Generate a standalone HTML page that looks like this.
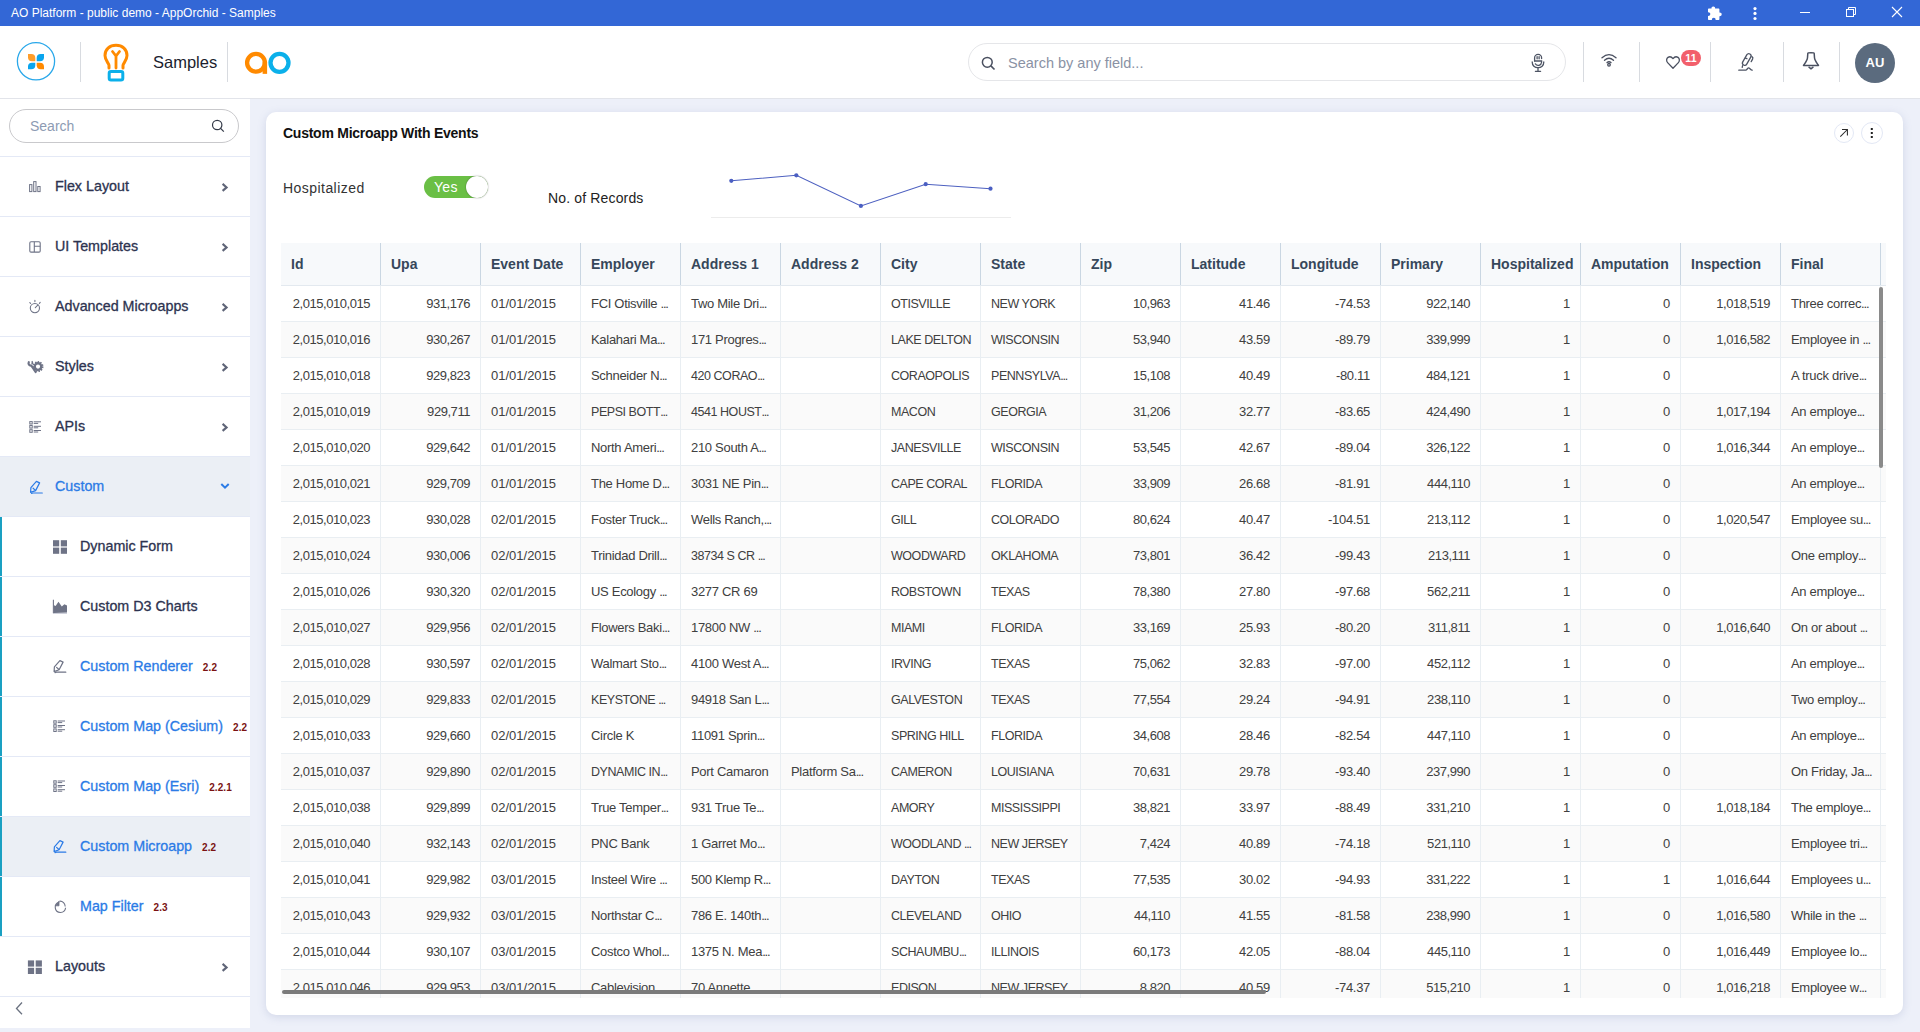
<!DOCTYPE html>
<html><head><meta charset="utf-8"><title>AO Platform</title>
<style>
*{box-sizing:border-box;margin:0;padding:0}
html,body{width:1920px;height:1032px;overflow:hidden;background:#edf0f9;font-family:"Liberation Sans",sans-serif;color:#222}
.abs{position:absolute}
#tb{position:absolute;left:0;top:0;width:1920px;height:26px;background:#3367d6;color:#fff;font-size:12px;line-height:26px;padding-left:11px}
#hd{position:absolute;left:0;top:26px;width:1920px;height:73px;background:#fff;border-bottom:1px solid #e2e4ea}
.vd{position:absolute;top:16px;width:1px;height:40px;background:#d8dbe0}
#side{position:absolute;left:0;top:99px;width:250px;height:929px;background:#fff}
.si{position:absolute;left:0;width:250px;height:60px;border-bottom:1px solid #e4e9f6}
.si.act{background:#ebeff5}
.tbar{position:absolute;left:0;top:0;width:2px;height:59px;background:#1aa0c2}
.sic{position:absolute;left:25px;top:20px}
.slab{position:absolute;left:55px;top:0;line-height:59px;font-size:14.3px;color:#2d3350;-webkit-text-stroke:0.3px currentColor;white-space:nowrap}
.slab.sub{left:80px}
.bdg{font-size:10px;color:#7a1212;margin-left:10px;font-weight:bold;-webkit-text-stroke:0;letter-spacing:0.1px}
.chev{position:absolute;left:219px;top:24px}
#card{position:absolute;left:266px;top:112px;width:1637px;height:903px;background:#fff;border-radius:10px;box-shadow:0 2px 9px rgba(110,125,175,0.22)}
#tbl{position:absolute;left:15px;top:131px;width:1605px;height:755px;overflow:hidden}
.thead{position:absolute;left:0;top:0;width:1605px;height:43px;background:#f7f9fb;border-bottom:1px solid #e3e9ef}
.th{position:absolute;top:0;width:100px;height:42px;border-right:1px solid #c9d6e2;padding-left:10px;line-height:42px;font-size:14px;font-weight:bold;color:#36475a;white-space:nowrap;overflow:hidden}
.tr{position:absolute;left:0;width:1605px;height:36px;background:#fff;border-bottom:1px solid #e9eef2}
.tr.alt{background:#fafafa}
.td{position:absolute;top:0;width:100px;height:35px;border-right:1px solid #e9eef2;padding:0 10px;line-height:35px;font-size:13px;color:#404040;white-space:nowrap;overflow:hidden;letter-spacing:-0.3px}
.td.n{letter-spacing:-0.45px}
.td.d{letter-spacing:0}
.td.u{font-size:12.5px;letter-spacing:-0.45px;padding-top:1px}
.td.r{text-align:right}
.el{font-style:normal;letter-spacing:-1.2px}
</style></head><body>
<div id="tb">AO Platform - public demo - AppOrchid - Samples
<svg class="abs" style="left:1707px;top:5px" width="16" height="16" viewBox="0 0 16 16"><path d="M6.3 1.5 C7.6 1.5 8.2 2.3 8.1 3.6 H11.4 C12 3.6 12.4 4 12.4 4.6 V7.4 C13.8 7.3 14.7 8 14.7 9.3 C14.7 10.6 13.8 11.3 12.4 11.2 V14 C12.4 14.6 12 15 11.4 15 H8.6 C8.7 13.6 8 12.8 6.8 12.8 C5.5 12.8 4.8 13.6 4.9 15 H2 C1.4 15 1 14.6 1 14 V11 C2.4 11.1 3.3 10.4 3.3 9.1 C3.3 7.8 2.4 7.1 1 7.2 V4.6 C1 4 1.4 3.6 2 3.6 H4.5 C4.4 2.3 5 1.5 6.3 1.5 Z" fill="#fff"/></svg>
<svg class="abs" style="left:1751px;top:5px" width="8" height="16" viewBox="0 0 8 16"><g fill="#fff"><circle cx="4" cy="3.6" r="1.6"/><circle cx="4" cy="8.4" r="1.6"/><circle cx="4" cy="13.5" r="1.6"/></g></svg>
<div class="abs" style="left:1800px;top:12px;width:10px;height:1px;background:#fff"></div>
<svg class="abs" style="left:1845px;top:6px" width="12" height="12" viewBox="0 0 12 12"><g fill="none" stroke="#fff" stroke-width="1"><rect x="1.5" y="3.5" width="7" height="7"/><path d="M3.5 3.5 V1.5 H10.5 V8.5 H8.5"/></g></svg>
<svg class="abs" style="left:1891px;top:6px" width="12" height="12" viewBox="0 0 12 12"><path d="M1 1 L11 11 M11 1 L1 11" stroke="#fff" stroke-width="1.1"/></svg>
</div>
<div id="hd">
<svg class="abs" style="left:16px;top:16px" width="40" height="40" viewBox="0 0 40 40"><circle cx="20" cy="19.3" r="18.6" fill="none" stroke="#2aa8ea" stroke-width="1.3"/>
<path d="M12 12 H15.3 A4 4 0 0 1 19.3 16 V19.3 H16 A4 4 0 0 1 12 15.3 Z" fill="#ff9d2a"/>
<path d="M28 12 V15.3 A4 4 0 0 1 24 19.3 H20.7 V16 A4 4 0 0 1 24.7 12 Z" fill="#0aa5ee"/>
<path d="M12 27.3 V24 A4 4 0 0 1 16 20.7 H19.3 V23.3 A4 4 0 0 1 15.3 27.3 Z" fill="#0aa5ee"/>
<path d="M28 27.3 H24.7 A4 4 0 0 1 20.7 23.3 V20.7 H24 A4 4 0 0 1 28 24.7 Z" fill="#ff8a00"/>
</svg>
<div class="vd" style="left:80px"></div>
<svg class="abs" style="left:100px;top:17px" width="32" height="40" viewBox="0 0 32 40"><path d="M9 25 V22.5 C9 20.5 5 17.5 5 12.5 C5 6.5 9.5 2.2 16 2.2 C22.5 2.2 27 6.5 27 12.5 C27 17.5 23 20.5 23 22.5 V25" fill="none" stroke="#ff8a00" stroke-width="3" stroke-linecap="round"/><path d="M16 25 V13 M12.5 8.5 L16 13 L19.5 8.5" fill="none" stroke="#ff8a00" stroke-width="2.8" stroke-linecap="round"/><rect x="9.2" y="28.5" width="13.6" height="8.5" rx="1.8" fill="none" stroke="#0bb0ea" stroke-width="3"/></svg>
<div class="abs" style="left:153px;top:26px;font-size:16.5px;color:#1b1d2e;line-height:20px">Samples</div>
<div class="vd" style="left:227px"></div>
<svg class="abs" style="left:244px;top:25px" width="50" height="24" viewBox="0 0 50 24"><circle cx="12" cy="11.8" r="8.9" fill="none" stroke="#ff8a00" stroke-width="4.3"/><rect x="18.6" y="11" width="4.5" height="11.85" fill="#ff8a00"/><circle cx="35.5" cy="11.8" r="9" fill="none" stroke="#0bb0ea" stroke-width="4.3"/></svg>
<div class="abs" style="left:968px;top:17px;width:598px;height:38px;border:1px solid #e5e6e9;border-radius:19px"></div>
<svg class="abs" style="left:981px;top:30px" width="15" height="15" viewBox="0 0 15 15"><circle cx="6.3" cy="6.3" r="4.9" fill="none" stroke="#4a5060" stroke-width="1.5"/><path d="M9.9 9.9 L13.5 13.5" stroke="#4a5060" stroke-width="1.6"/></svg>
<div class="abs" style="left:1008px;top:27px;font-size:14.5px;color:#8a92a4;line-height:20px">Search by any field...</div>
<svg class="abs" style="left:1529px;top:27px" width="18" height="20" viewBox="0 0 18 20"><g fill="none" stroke="#4d5464" stroke-width="1.3" stroke-linecap="round"><path d="M5.6 8 V4.9 A3.5 3.5 0 0 1 12.6 4.9 V5.6"/><path d="M5.6 8 H12.6 V9.3 A3.4 3.4 0 0 1 6.4 10.9"/><path d="M8.1 3.6 V5.8 M10.1 3.6 V5.8"/><path d="M3.2 9 C3.2 12.6 5.7 14.7 9 14.7 C12.3 14.7 14.8 12.6 14.8 9"/><path d="M9 14.7 V18 M6.4 18.3 H11.6"/></g></svg>
<div class="vd" style="left:1583px"></div>
<svg class="abs" style="left:1600px;top:27px" width="18" height="14" viewBox="0 0 18 14"><g fill="none" stroke="#4a5060" stroke-width="1.3" stroke-linecap="round"><path d="M2 4.8 C6.5 0.8 11.5 0.8 16 4.8"/><path d="M4.5 7.3 C7.3 4.8 10.7 4.8 13.5 7.3"/><path d="M7 9.6 C8.2 8.6 9.8 8.6 11 9.6"/><circle cx="9" cy="11.8" r="1.3"/></g></svg>
<div class="vd" style="left:1639px"></div>
<svg class="abs" style="left:1664px;top:28px" width="18" height="17" viewBox="0 0 18 17"><path d="M9 14.2 L3.6 8.6 C2.2 7.1 2.3 4.6 4 3.4 C5.6 2.3 7.6 2.8 9 4.6 C10.4 2.8 12.4 2.3 14 3.4 C15.7 4.6 15.8 7.1 14.4 8.6 Z" fill="none" stroke="#4a5060" stroke-width="1.3" stroke-linejoin="round"/></svg>
<div class="abs" style="left:1681px;top:24px;width:20px;height:16px;border-radius:8px;background:#f25f6b;color:#fff;font-size:10.5px;font-weight:bold;text-align:center;line-height:16px;letter-spacing:0.3px">11</div>
<div class="vd" style="left:1710px"></div>
<svg class="abs" style="left:1736px;top:24px" width="22" height="22" viewBox="0 0 22 22"><g fill="none" stroke="#4d5464" stroke-width="1.3" stroke-linecap="round" stroke-linejoin="round"><rect x="8.45" y="3.2" width="4.6" height="12.6" rx="2.3" transform="rotate(30 10.75 9.5)"/><path d="M15.9 6.6 C16.9 7.2 17.1 8.2 16.6 9.1 L15.2 11.6"/><path d="M9.4 8.1 L10.9 8.7"/><path d="M6.6 15.6 L6.2 17.4"/><path d="M2.8 20.2 H9.8 C10.8 20.2 11.6 17.8 12.6 17.8 C13.6 17.8 14.6 20.2 16.2 20.2"/></g></svg>
<div class="vd" style="left:1783px"></div>
<svg class="abs" style="left:1801px;top:25px" width="20" height="20" viewBox="0 0 20 20"><g fill="none" stroke="#4a5060" stroke-width="1.5" stroke-linejoin="round"><path d="M6.8 2.5 C6.8 1.6 13.2 1.6 13.2 2.5 L13.5 6.8 C13.7 9.5 15.8 12 17.5 14.4 H2.5 C4.2 12 6.3 9.5 6.5 6.8 Z"/><path d="M8 16.2 L10 17.8 L12 16.2" stroke-linecap="round"/></g></svg>
<div class="vd" style="left:1839px"></div>
<div class="abs" style="left:1855px;top:17px;width:40px;height:40px;border-radius:20px;background:#5b6b7e;color:#fff;font-size:13px;font-weight:bold;text-align:center;line-height:40px">AU</div>
</div>
<div id="side">
<div class="abs" style="left:9px;top:10px;width:230px;height:34px;border:1px solid #c9c9cc;border-radius:17px"></div>
<div class="abs" style="left:30px;top:17px;font-size:14px;color:#8d9bb3;line-height:20px">Search</div>
<svg class="abs" style="left:210px;top:19px" width="16" height="16" viewBox="0 0 16 16"><circle cx="7.2" cy="7" r="4.7" fill="none" stroke="#333a48" stroke-width="1.2"/><path d="M10.6 10.4 L13.8 13.6" stroke="#333a48" stroke-width="1.3"/></svg>
<div class="abs" style="left:0;top:57px;width:250px;height:1px;background:#e4e9f6"></div>
<div class="si" style="top:58px"><svg class="sic" style="left:25px" width="20" height="20" viewBox="0 0 20 20"><g fill="none" stroke="#6e7386" stroke-width="1"><rect x="4.6" y="7.6" width="2.3" height="7"/><rect x="8.7" y="4.6" width="2.3" height="10"/><rect x="12.8" y="9.5" width="2.3" height="5.1"/></g></svg><div class="slab">Flex Layout</div><svg class="chev" width="12" height="14" viewBox="0 0 12 14"><path d="M3.6 2.9 L7.6 6.4 L3.6 9.9" fill="none" stroke="#5f6578" stroke-width="2.1"/></svg></div>
<div class="si" style="top:118px"><svg class="sic" style="left:25px" width="20" height="20" viewBox="0 0 20 20"><g fill="none" stroke="#6e7386" stroke-width="1.1"><rect x="4.8" y="4.7" width="10.4" height="10.4" rx="1.2"/><path d="M9.3 4.7 V15.1 M9.3 9.3 H15.2"/></g></svg><div class="slab">UI Templates</div><svg class="chev" width="12" height="14" viewBox="0 0 12 14"><path d="M3.6 2.9 L7.6 6.4 L3.6 9.9" fill="none" stroke="#5f6578" stroke-width="2.1"/></svg></div>
<div class="si" style="top:178px"><svg class="sic" style="left:25px" width="20" height="20" viewBox="0 0 20 20"><g fill="none" stroke="#6e7386" stroke-width="1.1" stroke-linecap="round"><circle cx="9.9" cy="11.1" r="4.6"/><path d="M9.9 3.2 V4.6 M4.8 5.6 L5.6 6.4 M15.2 5.4 L14.4 6.3 M10.3 10.6 L12.8 8.2"/></g></svg><div class="slab">Advanced Microapps</div><svg class="chev" width="12" height="14" viewBox="0 0 12 14"><path d="M3.6 2.9 L7.6 6.4 L3.6 9.9" fill="none" stroke="#5f6578" stroke-width="2.1"/></svg></div>
<div class="si" style="top:238px"><svg class="sic" style="left:25px" width="20" height="20" viewBox="0 0 20 20"><g fill="none" stroke="#6e7386"><path d="M3.8 5.2 C3 7 4.2 9 6.4 8.6 L10.6 15" stroke-width="2.2" stroke-linecap="round"/><path d="M6.8 4.2 C7.6 5 7.6 6.4 6.7 7.2" stroke-width="1.6"/><circle cx="13" cy="9.6" r="3.3" stroke-width="2.4"/><circle cx="13" cy="9.6" r="4.6" stroke-width="1.8" stroke-dasharray="1.4 1.2"/></g></svg><div class="slab">Styles</div><svg class="chev" width="12" height="14" viewBox="0 0 12 14"><path d="M3.6 2.9 L7.6 6.4 L3.6 9.9" fill="none" stroke="#5f6578" stroke-width="2.1"/></svg></div>
<div class="si" style="top:298px"><svg class="sic" style="left:25px" width="20" height="20" viewBox="0 0 20 20"><g transform="translate(0,0)" fill="none" stroke="#6e7386" stroke-width="1"><rect x="4.8" y="4.6" width="2.4" height="2.4"/><rect x="4.8" y="8.5" width="2.4" height="2.6"/><rect x="4.8" y="12.7" width="2.4" height="2.6"/><path d="M8.7 4.8 H16 M8.7 6.4 H13.2 M8.7 9.3 H16 M8.7 10.8 H13.2 M8.7 13.5 H16 M8.7 15 H13.2"/></g></svg><div class="slab">APIs</div><svg class="chev" width="12" height="14" viewBox="0 0 12 14"><path d="M3.6 2.9 L7.6 6.4 L3.6 9.9" fill="none" stroke="#5f6578" stroke-width="2.1"/></svg></div>
<div class="si act" style="top:358px"><svg class="sic" style="left:25px" width="20" height="20" viewBox="0 0 20 20"><g transform="translate(0,0)" fill="none" stroke="#2b7be6" stroke-width="1.2" stroke-linejoin="round" stroke-linecap="round"><path d="M5.6 15.4 L5.9 10.6 L11.4 4.4 L14.6 5.9 L10.6 13.6 Z M8.1 11.2 L10.2 13.1"/><path d="M6.5 16.4 L8 16 H17.3"/></g></svg><div class="slab" style="color:#2b7be6">Custom</div><svg class="chev" width="14" height="12" viewBox="0 0 14 12"><path d="M2.3 3 L6 6.6 L9.7 3" fill="none" stroke="#2b7be6" stroke-width="2"/></svg></div>
<div class="si" style="top:418px"><svg class="sic" style="left:50px" width="20" height="20" viewBox="0 0 20 20"><g transform="translate(0,0)" fill="#6e7386"><rect x="3" y="3.2" width="6.2" height="6.2"/><rect x="10.8" y="3.2" width="6.2" height="6.2"/><rect x="3" y="10.6" width="6.2" height="6.2"/><rect x="10.8" y="10.6" width="6.2" height="6.2"/></g></svg><div class="slab sub">Dynamic Form</div><div class="tbar"></div></div>
<div class="si" style="top:478px"><svg class="sic" style="left:50px" width="20" height="20" viewBox="0 0 20 20"><path d="M3.4 2.8 V16.2 H17" fill="none" stroke="#b9bccb" stroke-width="1"/><path d="M3.4 2.8 V16.2" stroke="#6e7386" stroke-width="1"/><path d="M4 16 V8.2 L5.6 9 L8.5 4.8 L11.8 9.4 L14.4 7.2 L17 8.4 V15.6 Z" fill="#6e7386"/></svg><div class="slab sub">Custom D3 Charts</div><div class="tbar"></div></div>
<div class="si" style="top:538px"><svg class="sic" style="left:50px" width="20" height="20" viewBox="0 0 20 20"><g transform="translate(-1.5,-0.8)" fill="none" stroke="#6e7386" stroke-width="1.2" stroke-linejoin="round" stroke-linecap="round"><path d="M5.6 15.4 L5.9 10.6 L11.4 4.4 L14.6 5.9 L10.6 13.6 Z M8.1 11.2 L10.2 13.1"/><path d="M6.5 16.4 L8 16 H17.3"/></g></svg><div class="slab sub" style="color:#2b7be6">Custom Renderer<span class="bdg">2.2</span></div><div class="tbar"></div></div>
<div class="si" style="top:598px"><svg class="sic" style="left:50px" width="20" height="20" viewBox="0 0 20 20"><g transform="translate(-1,-0.8)" fill="none" stroke="#6e7386" stroke-width="1"><rect x="4.8" y="4.6" width="2.4" height="2.4"/><rect x="4.8" y="8.5" width="2.4" height="2.6"/><rect x="4.8" y="12.7" width="2.4" height="2.6"/><path d="M8.7 4.8 H16 M8.7 6.4 H13.2 M8.7 9.3 H16 M8.7 10.8 H13.2 M8.7 13.5 H16 M8.7 15 H13.2"/></g></svg><div class="slab sub" style="color:#2b7be6">Custom Map (Cesium)<span class="bdg">2.2</span></div><div class="tbar"></div></div>
<div class="si" style="top:658px"><svg class="sic" style="left:50px" width="20" height="20" viewBox="0 0 20 20"><g transform="translate(-1,-0.8)" fill="none" stroke="#6e7386" stroke-width="1"><rect x="4.8" y="4.6" width="2.4" height="2.4"/><rect x="4.8" y="8.5" width="2.4" height="2.6"/><rect x="4.8" y="12.7" width="2.4" height="2.6"/><path d="M8.7 4.8 H16 M8.7 6.4 H13.2 M8.7 9.3 H16 M8.7 10.8 H13.2 M8.7 13.5 H16 M8.7 15 H13.2"/></g></svg><div class="slab sub" style="color:#2b7be6">Custom Map (Esri)<span class="bdg">2.2.1</span></div><div class="tbar"></div></div>
<div class="si act" style="top:718px"><svg class="sic" style="left:50px" width="20" height="20" viewBox="0 0 20 20"><g transform="translate(-1.5,-0.8)" fill="none" stroke="#2b7be6" stroke-width="1.2" stroke-linejoin="round" stroke-linecap="round"><path d="M5.6 15.4 L5.9 10.6 L11.4 4.4 L14.6 5.9 L10.6 13.6 Z M8.1 11.2 L10.2 13.1"/><path d="M6.5 16.4 L8 16 H17.3"/></g></svg><div class="slab sub" style="color:#2b7be6">Custom Microapp<span class="bdg">2.2</span></div><div class="tbar"></div></div>
<div class="si" style="top:778px"><svg class="sic" style="left:50px" width="20" height="20" viewBox="0 0 20 20"><g fill="none" stroke="#6e7386" stroke-width="1.1"><path d="M9.2 5.2 A5.2 5.2 0 1 0 15.6 10.8"/><path d="M9.4 4.2 A5.2 5.2 0 0 1 15.2 9.6"/><path d="M5.2 8.8 L9 4.2 V8.8 Z" fill="#6e7386" stroke-width="0.8"/></g></svg><div class="slab sub" style="color:#2b7be6">Map Filter<span class="bdg">2.3</span></div><div class="tbar"></div></div>
<div class="si" style="top:838px"><svg class="sic" style="left:25px" width="20" height="20" viewBox="0 0 20 20"><g transform="translate(-0.1,0.2)" fill="#6e7386"><rect x="3" y="3.2" width="6.2" height="6.2"/><rect x="10.8" y="3.2" width="6.2" height="6.2"/><rect x="3" y="10.6" width="6.2" height="6.2"/><rect x="10.8" y="10.6" width="6.2" height="6.2"/></g></svg><div class="slab">Layouts</div><svg class="chev" width="12" height="14" viewBox="0 0 12 14"><path d="M3.6 2.9 L7.6 6.4 L3.6 9.9" fill="none" stroke="#5f6578" stroke-width="2.1"/></svg></div>
<svg class="abs" style="left:13px;top:902px" width="12" height="14" viewBox="0 0 12 14"><path d="M9 1.5 L3.5 7.5 L9 13.2" fill="none" stroke="#6b7280" stroke-width="1.3"/></svg>
</div>
<div id="card">
<div class="abs" style="left:17px;top:13px;font-size:14px;font-weight:bold;color:#111;letter-spacing:-0.25px">Custom Microapp With Events</div>
<div class="abs" style="left:1568px;top:11px;width:20px;height:20px;border:1px solid #e3e8f5;border-radius:10px"></div>
<svg class="abs" style="left:1572px;top:15px" width="12" height="12" viewBox="0 0 12 12"><path d="M2.3 9.6 L9.4 2.5 M4 2.5 H9.4 V8.4" fill="none" stroke="#2a2a2a" stroke-width="1.05"/></svg>
<div class="abs" style="left:1595px;top:10px;width:22px;height:22px;border:1px solid #e3e8f5;border-radius:11px"></div>
<svg class="abs" style="left:1604px;top:15px" width="4" height="12" viewBox="0 0 4 12"><g fill="#222"><rect x="0.8" y="1" width="2" height="2"/><rect x="0.8" y="5" width="2" height="2"/><rect x="0.8" y="9" width="2" height="2"/></g></svg>
<div class="abs" style="left:17px;top:66px;font-size:14px;color:#333;line-height:20px;letter-spacing:0.45px">Hospitalized</div>
<div class="abs" style="left:158px;top:64px;width:64px;height:22px;border-radius:11px;background:#6abf45"></div>
<div class="abs" style="left:168px;top:65px;font-size:14px;color:#fff;line-height:20px;letter-spacing:0.3px">Yes</div>
<div class="abs" style="left:200px;top:64px;width:22px;height:22px;border-radius:11px;background:#fff;box-shadow:0 0 1.5px rgba(0,0,0,0.5)"></div>
<div class="abs" style="left:282px;top:76px;font-size:14px;color:#222;line-height:20px;letter-spacing:0.15px">No. of Records</div>
<svg class="abs" style="left:444px;top:60px" width="302" height="48" viewBox="0 0 302 48"><path d="M1 45.5 H301" stroke="#ececec" stroke-width="1"/><polyline points="21.3,8.8 86.3,3.3 150.9,33.9 215.7,12.2 280.5,16.7" fill="none" stroke="#4d60c0" stroke-width="1.1"/><g fill="#4b5fc2"><circle cx="21.3" cy="8.8" r="2.1"/><circle cx="86.3" cy="3.3" r="2.1"/><circle cx="150.9" cy="33.9" r="2.1"/><circle cx="215.7" cy="12.2" r="2.1"/><circle cx="280.5" cy="16.7" r="2.1"/></g></svg>
<div id="tbl">
<div class="thead"><div class="th" style="left:0px">Id</div><div class="th" style="left:100px">Upa</div><div class="th" style="left:200px">Event Date</div><div class="th" style="left:300px">Employer</div><div class="th" style="left:400px">Address 1</div><div class="th" style="left:500px">Address 2</div><div class="th" style="left:600px">City</div><div class="th" style="left:700px">State</div><div class="th" style="left:800px">Zip</div><div class="th" style="left:900px">Latitude</div><div class="th" style="left:1000px">Longitude</div><div class="th" style="left:1100px">Primary</div><div class="th" style="left:1200px">Hospitalized</div><div class="th" style="left:1300px">Amputation</div><div class="th" style="left:1400px">Inspection</div><div class="th" style="left:1500px">Final</div></div>
<div class="tr" style="top:43px"><div class="td r n" style="left:0px">2,015,010,015</div><div class="td r n" style="left:100px">931,176</div><div class="td d" style="left:200px">01/01/2015</div><div class="td" style="left:300px">FCI Otisville <i class="el">...</i></div><div class="td" style="left:400px">Two Mile Dri<i class="el">...</i></div><div class="td" style="left:500px"></div><div class="td u" style="left:600px">OTISVILLE</div><div class="td u" style="left:700px">NEW YORK</div><div class="td r n" style="left:800px">10,963</div><div class="td r" style="left:900px">41.46</div><div class="td r" style="left:1000px">-74.53</div><div class="td r n" style="left:1100px">922,140</div><div class="td r" style="left:1200px">1</div><div class="td r" style="left:1300px">0</div><div class="td r n" style="left:1400px">1,018,519</div><div class="td" style="left:1500px">Three correc<i class="el">...</i></div></div>
<div class="tr alt" style="top:79px"><div class="td r n" style="left:0px">2,015,010,016</div><div class="td r n" style="left:100px">930,267</div><div class="td d" style="left:200px">01/01/2015</div><div class="td" style="left:300px">Kalahari Ma<i class="el">...</i></div><div class="td" style="left:400px">171 Progres<i class="el">...</i></div><div class="td" style="left:500px"></div><div class="td u" style="left:600px">LAKE DELTON</div><div class="td u" style="left:700px">WISCONSIN</div><div class="td r n" style="left:800px">53,940</div><div class="td r" style="left:900px">43.59</div><div class="td r" style="left:1000px">-89.79</div><div class="td r n" style="left:1100px">339,999</div><div class="td r" style="left:1200px">1</div><div class="td r" style="left:1300px">0</div><div class="td r n" style="left:1400px">1,016,582</div><div class="td" style="left:1500px">Employee in <i class="el">...</i></div></div>
<div class="tr" style="top:115px"><div class="td r n" style="left:0px">2,015,010,018</div><div class="td r n" style="left:100px">929,823</div><div class="td d" style="left:200px">01/01/2015</div><div class="td" style="left:300px">Schneider N<i class="el">...</i></div><div class="td u" style="left:400px">420 CORAO<i class="el">...</i></div><div class="td" style="left:500px"></div><div class="td u" style="left:600px">CORAOPOLIS</div><div class="td u" style="left:700px">PENNSYLVA<i class="el">...</i></div><div class="td r n" style="left:800px">15,108</div><div class="td r" style="left:900px">40.49</div><div class="td r" style="left:1000px">-80.11</div><div class="td r n" style="left:1100px">484,121</div><div class="td r" style="left:1200px">1</div><div class="td r" style="left:1300px">0</div><div class="td r" style="left:1400px"></div><div class="td" style="left:1500px">A truck drive<i class="el">...</i></div></div>
<div class="tr alt" style="top:151px"><div class="td r n" style="left:0px">2,015,010,019</div><div class="td r n" style="left:100px">929,711</div><div class="td d" style="left:200px">01/01/2015</div><div class="td u" style="left:300px">PEPSI BOTT<i class="el">...</i></div><div class="td u" style="left:400px">4541 HOUST<i class="el">...</i></div><div class="td" style="left:500px"></div><div class="td u" style="left:600px">MACON</div><div class="td u" style="left:700px">GEORGIA</div><div class="td r n" style="left:800px">31,206</div><div class="td r" style="left:900px">32.77</div><div class="td r" style="left:1000px">-83.65</div><div class="td r n" style="left:1100px">424,490</div><div class="td r" style="left:1200px">1</div><div class="td r" style="left:1300px">0</div><div class="td r n" style="left:1400px">1,017,194</div><div class="td" style="left:1500px">An employe<i class="el">...</i></div></div>
<div class="tr" style="top:187px"><div class="td r n" style="left:0px">2,015,010,020</div><div class="td r n" style="left:100px">929,642</div><div class="td d" style="left:200px">01/01/2015</div><div class="td" style="left:300px">North Ameri<i class="el">...</i></div><div class="td" style="left:400px">210 South A<i class="el">...</i></div><div class="td" style="left:500px"></div><div class="td u" style="left:600px">JANESVILLE</div><div class="td u" style="left:700px">WISCONSIN</div><div class="td r n" style="left:800px">53,545</div><div class="td r" style="left:900px">42.67</div><div class="td r" style="left:1000px">-89.04</div><div class="td r n" style="left:1100px">326,122</div><div class="td r" style="left:1200px">1</div><div class="td r" style="left:1300px">0</div><div class="td r n" style="left:1400px">1,016,344</div><div class="td" style="left:1500px">An employe<i class="el">...</i></div></div>
<div class="tr alt" style="top:223px"><div class="td r n" style="left:0px">2,015,010,021</div><div class="td r n" style="left:100px">929,709</div><div class="td d" style="left:200px">01/01/2015</div><div class="td" style="left:300px">The Home D<i class="el">...</i></div><div class="td" style="left:400px">3031 NE Pin<i class="el">...</i></div><div class="td" style="left:500px"></div><div class="td u" style="left:600px">CAPE CORAL</div><div class="td u" style="left:700px">FLORIDA</div><div class="td r n" style="left:800px">33,909</div><div class="td r" style="left:900px">26.68</div><div class="td r" style="left:1000px">-81.91</div><div class="td r n" style="left:1100px">444,110</div><div class="td r" style="left:1200px">1</div><div class="td r" style="left:1300px">0</div><div class="td r" style="left:1400px"></div><div class="td" style="left:1500px">An employe<i class="el">...</i></div></div>
<div class="tr" style="top:259px"><div class="td r n" style="left:0px">2,015,010,023</div><div class="td r n" style="left:100px">930,028</div><div class="td d" style="left:200px">02/01/2015</div><div class="td" style="left:300px">Foster Truck<i class="el">...</i></div><div class="td" style="left:400px">Wells Ranch,<i class="el">...</i></div><div class="td" style="left:500px"></div><div class="td u" style="left:600px">GILL</div><div class="td u" style="left:700px">COLORADO</div><div class="td r n" style="left:800px">80,624</div><div class="td r" style="left:900px">40.47</div><div class="td r" style="left:1000px">-104.51</div><div class="td r n" style="left:1100px">213,112</div><div class="td r" style="left:1200px">1</div><div class="td r" style="left:1300px">0</div><div class="td r n" style="left:1400px">1,020,547</div><div class="td" style="left:1500px">Employee su<i class="el">...</i></div></div>
<div class="tr alt" style="top:295px"><div class="td r n" style="left:0px">2,015,010,024</div><div class="td r n" style="left:100px">930,006</div><div class="td d" style="left:200px">02/01/2015</div><div class="td" style="left:300px">Trinidad Drill<i class="el">...</i></div><div class="td u" style="left:400px">38734 S CR <i class="el">...</i></div><div class="td" style="left:500px"></div><div class="td u" style="left:600px">WOODWARD</div><div class="td u" style="left:700px">OKLAHOMA</div><div class="td r n" style="left:800px">73,801</div><div class="td r" style="left:900px">36.42</div><div class="td r" style="left:1000px">-99.43</div><div class="td r n" style="left:1100px">213,111</div><div class="td r" style="left:1200px">1</div><div class="td r" style="left:1300px">0</div><div class="td r" style="left:1400px"></div><div class="td" style="left:1500px">One employ<i class="el">...</i></div></div>
<div class="tr" style="top:331px"><div class="td r n" style="left:0px">2,015,010,026</div><div class="td r n" style="left:100px">930,320</div><div class="td d" style="left:200px">02/01/2015</div><div class="td" style="left:300px">US Ecology <i class="el">...</i></div><div class="td" style="left:400px">3277 CR 69</div><div class="td" style="left:500px"></div><div class="td u" style="left:600px">ROBSTOWN</div><div class="td u" style="left:700px">TEXAS</div><div class="td r n" style="left:800px">78,380</div><div class="td r" style="left:900px">27.80</div><div class="td r" style="left:1000px">-97.68</div><div class="td r n" style="left:1100px">562,211</div><div class="td r" style="left:1200px">1</div><div class="td r" style="left:1300px">0</div><div class="td r" style="left:1400px"></div><div class="td" style="left:1500px">An employe<i class="el">...</i></div></div>
<div class="tr alt" style="top:367px"><div class="td r n" style="left:0px">2,015,010,027</div><div class="td r n" style="left:100px">929,956</div><div class="td d" style="left:200px">02/01/2015</div><div class="td" style="left:300px">Flowers Baki<i class="el">...</i></div><div class="td" style="left:400px">17800 NW <i class="el">...</i></div><div class="td" style="left:500px"></div><div class="td u" style="left:600px">MIAMI</div><div class="td u" style="left:700px">FLORIDA</div><div class="td r n" style="left:800px">33,169</div><div class="td r" style="left:900px">25.93</div><div class="td r" style="left:1000px">-80.20</div><div class="td r n" style="left:1100px">311,811</div><div class="td r" style="left:1200px">1</div><div class="td r" style="left:1300px">0</div><div class="td r n" style="left:1400px">1,016,640</div><div class="td" style="left:1500px">On or about <i class="el">...</i></div></div>
<div class="tr" style="top:403px"><div class="td r n" style="left:0px">2,015,010,028</div><div class="td r n" style="left:100px">930,597</div><div class="td d" style="left:200px">02/01/2015</div><div class="td" style="left:300px">Walmart Sto<i class="el">...</i></div><div class="td" style="left:400px">4100 West A<i class="el">...</i></div><div class="td" style="left:500px"></div><div class="td u" style="left:600px">IRVING</div><div class="td u" style="left:700px">TEXAS</div><div class="td r n" style="left:800px">75,062</div><div class="td r" style="left:900px">32.83</div><div class="td r" style="left:1000px">-97.00</div><div class="td r n" style="left:1100px">452,112</div><div class="td r" style="left:1200px">1</div><div class="td r" style="left:1300px">0</div><div class="td r" style="left:1400px"></div><div class="td" style="left:1500px">An employe<i class="el">...</i></div></div>
<div class="tr alt" style="top:439px"><div class="td r n" style="left:0px">2,015,010,029</div><div class="td r n" style="left:100px">929,833</div><div class="td d" style="left:200px">02/01/2015</div><div class="td u" style="left:300px">KEYSTONE <i class="el">...</i></div><div class="td" style="left:400px">94918 San L<i class="el">...</i></div><div class="td" style="left:500px"></div><div class="td u" style="left:600px">GALVESTON</div><div class="td u" style="left:700px">TEXAS</div><div class="td r n" style="left:800px">77,554</div><div class="td r" style="left:900px">29.24</div><div class="td r" style="left:1000px">-94.91</div><div class="td r n" style="left:1100px">238,110</div><div class="td r" style="left:1200px">1</div><div class="td r" style="left:1300px">0</div><div class="td r" style="left:1400px"></div><div class="td" style="left:1500px">Two employ<i class="el">...</i></div></div>
<div class="tr" style="top:475px"><div class="td r n" style="left:0px">2,015,010,033</div><div class="td r n" style="left:100px">929,660</div><div class="td d" style="left:200px">02/01/2015</div><div class="td" style="left:300px">Circle K</div><div class="td" style="left:400px">11091 Sprin<i class="el">...</i></div><div class="td" style="left:500px"></div><div class="td u" style="left:600px">SPRING HILL</div><div class="td u" style="left:700px">FLORIDA</div><div class="td r n" style="left:800px">34,608</div><div class="td r" style="left:900px">28.46</div><div class="td r" style="left:1000px">-82.54</div><div class="td r n" style="left:1100px">447,110</div><div class="td r" style="left:1200px">1</div><div class="td r" style="left:1300px">0</div><div class="td r" style="left:1400px"></div><div class="td" style="left:1500px">An employe<i class="el">...</i></div></div>
<div class="tr alt" style="top:511px"><div class="td r n" style="left:0px">2,015,010,037</div><div class="td r n" style="left:100px">929,890</div><div class="td d" style="left:200px">02/01/2015</div><div class="td u" style="left:300px">DYNAMIC IN<i class="el">...</i></div><div class="td" style="left:400px">Port Camaron</div><div class="td" style="left:500px">Platform Sa<i class="el">...</i></div><div class="td u" style="left:600px">CAMERON</div><div class="td u" style="left:700px">LOUISIANA</div><div class="td r n" style="left:800px">70,631</div><div class="td r" style="left:900px">29.78</div><div class="td r" style="left:1000px">-93.40</div><div class="td r n" style="left:1100px">237,990</div><div class="td r" style="left:1200px">1</div><div class="td r" style="left:1300px">0</div><div class="td r" style="left:1400px"></div><div class="td" style="left:1500px">On Friday, Ja<i class="el">...</i></div></div>
<div class="tr" style="top:547px"><div class="td r n" style="left:0px">2,015,010,038</div><div class="td r n" style="left:100px">929,899</div><div class="td d" style="left:200px">02/01/2015</div><div class="td" style="left:300px">True Temper<i class="el">...</i></div><div class="td" style="left:400px">931 True Te<i class="el">...</i></div><div class="td" style="left:500px"></div><div class="td u" style="left:600px">AMORY</div><div class="td u" style="left:700px">MISSISSIPPI</div><div class="td r n" style="left:800px">38,821</div><div class="td r" style="left:900px">33.97</div><div class="td r" style="left:1000px">-88.49</div><div class="td r n" style="left:1100px">331,210</div><div class="td r" style="left:1200px">1</div><div class="td r" style="left:1300px">0</div><div class="td r n" style="left:1400px">1,018,184</div><div class="td" style="left:1500px">The employe<i class="el">...</i></div></div>
<div class="tr alt" style="top:583px"><div class="td r n" style="left:0px">2,015,010,040</div><div class="td r n" style="left:100px">932,143</div><div class="td d" style="left:200px">02/01/2015</div><div class="td" style="left:300px">PNC Bank</div><div class="td" style="left:400px">1 Garret Mo<i class="el">...</i></div><div class="td" style="left:500px"></div><div class="td u" style="left:600px">WOODLAND <i class="el">...</i></div><div class="td u" style="left:700px">NEW JERSEY</div><div class="td r n" style="left:800px">7,424</div><div class="td r" style="left:900px">40.89</div><div class="td r" style="left:1000px">-74.18</div><div class="td r n" style="left:1100px">521,110</div><div class="td r" style="left:1200px">1</div><div class="td r" style="left:1300px">0</div><div class="td r" style="left:1400px"></div><div class="td" style="left:1500px">Employee tri<i class="el">...</i></div></div>
<div class="tr" style="top:619px"><div class="td r n" style="left:0px">2,015,010,041</div><div class="td r n" style="left:100px">929,982</div><div class="td d" style="left:200px">03/01/2015</div><div class="td" style="left:300px">Insteel Wire <i class="el">...</i></div><div class="td" style="left:400px">500 Klemp R<i class="el">...</i></div><div class="td" style="left:500px"></div><div class="td u" style="left:600px">DAYTON</div><div class="td u" style="left:700px">TEXAS</div><div class="td r n" style="left:800px">77,535</div><div class="td r" style="left:900px">30.02</div><div class="td r" style="left:1000px">-94.93</div><div class="td r n" style="left:1100px">331,222</div><div class="td r" style="left:1200px">1</div><div class="td r" style="left:1300px">1</div><div class="td r n" style="left:1400px">1,016,644</div><div class="td" style="left:1500px">Employees u<i class="el">...</i></div></div>
<div class="tr alt" style="top:655px"><div class="td r n" style="left:0px">2,015,010,043</div><div class="td r n" style="left:100px">929,932</div><div class="td d" style="left:200px">03/01/2015</div><div class="td" style="left:300px">Northstar C<i class="el">...</i></div><div class="td" style="left:400px">786 E. 140th<i class="el">...</i></div><div class="td" style="left:500px"></div><div class="td u" style="left:600px">CLEVELAND</div><div class="td u" style="left:700px">OHIO</div><div class="td r n" style="left:800px">44,110</div><div class="td r" style="left:900px">41.55</div><div class="td r" style="left:1000px">-81.58</div><div class="td r n" style="left:1100px">238,990</div><div class="td r" style="left:1200px">1</div><div class="td r" style="left:1300px">0</div><div class="td r n" style="left:1400px">1,016,580</div><div class="td" style="left:1500px">While in the <i class="el">...</i></div></div>
<div class="tr" style="top:691px"><div class="td r n" style="left:0px">2,015,010,044</div><div class="td r n" style="left:100px">930,107</div><div class="td d" style="left:200px">03/01/2015</div><div class="td" style="left:300px">Costco Whol<i class="el">...</i></div><div class="td" style="left:400px">1375 N. Mea<i class="el">...</i></div><div class="td" style="left:500px"></div><div class="td u" style="left:600px">SCHAUMBU<i class="el">...</i></div><div class="td u" style="left:700px">ILLINOIS</div><div class="td r n" style="left:800px">60,173</div><div class="td r" style="left:900px">42.05</div><div class="td r" style="left:1000px">-88.04</div><div class="td r n" style="left:1100px">445,110</div><div class="td r" style="left:1200px">1</div><div class="td r" style="left:1300px">0</div><div class="td r n" style="left:1400px">1,016,449</div><div class="td" style="left:1500px">Employee lo<i class="el">...</i></div></div>
<div class="tr alt" style="top:727px"><div class="td r n" style="left:0px">2,015,010,046</div><div class="td r n" style="left:100px">929,953</div><div class="td d" style="left:200px">03/01/2015</div><div class="td" style="left:300px">Cablevision</div><div class="td" style="left:400px">70 Annette <i class="el">...</i></div><div class="td" style="left:500px"></div><div class="td u" style="left:600px">EDISON</div><div class="td u" style="left:700px">NEW JERSEY</div><div class="td r n" style="left:800px">8,820</div><div class="td r" style="left:900px">40.59</div><div class="td r" style="left:1000px">-74.37</div><div class="td r n" style="left:1100px">515,210</div><div class="td r" style="left:1200px">1</div><div class="td r" style="left:1300px">0</div><div class="td r n" style="left:1400px">1,016,218</div><div class="td" style="left:1500px">Employee w<i class="el">...</i></div></div>
<div class="abs" style="left:1598px;top:44px;width:4px;height:181px;border-radius:2px;background:#8a8a8a"></div>
<div class="abs" style="left:1px;top:747px;width:984px;height:4px;border-radius:2px;background:#7b7b7b"></div>
</div>
</div>
</body></html>
